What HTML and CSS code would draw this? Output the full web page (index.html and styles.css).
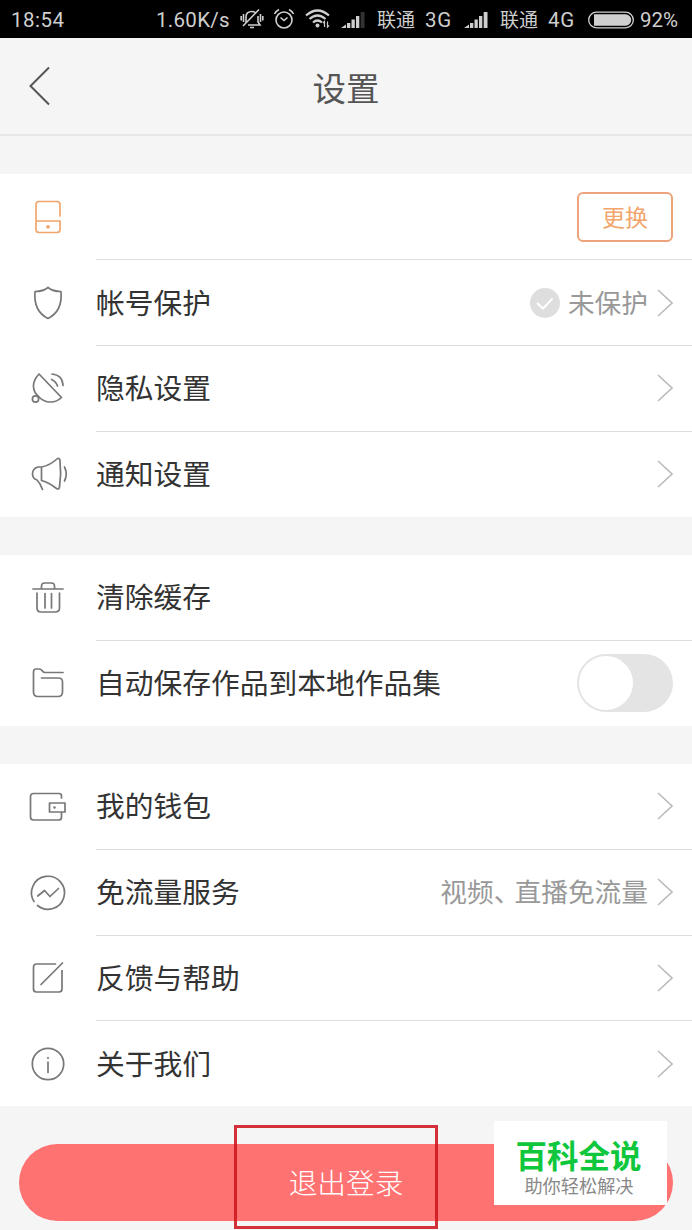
FILE: index.html
```html
<!DOCTYPE html>
<html lang="zh-CN">
<head>
<meta charset="utf-8">
<title>设置</title>
<link rel="stylesheet" href="styles.css">
</head>
<body>
<div class="screen">
  <div class="status">
    <span class="time">18:54</span>
    <span class="speed">1.60K/s</span>
    <svg class="s-bell" width="24" height="22" viewBox="0 0 24 22" fill="none" stroke="#cfcfcf" stroke-width="1.6"><path d="M6 14.500 V9 Q6 3.500 12 3.500 Q14 3.500 15 4.500 M18 8 V14 L20 17 H8 M10 19.500 H14 M19 1.500 L3 18 M3.500 6 V14 M1.200 8 V12.500 M20.500 6 V14 M22.800 8 V12.500"/></svg>
    <svg class="s-alarm" width="22" height="22" viewBox="0 0 22 22" fill="none" stroke="#cfcfcf" stroke-width="1.6"><circle cx="11" cy="12" r="8"/><path d="M7.500 9.500 L11 12.500 L14.500 9.500 M1.500 6 Q3 3 6 1.500 M20.500 6 Q19 3 16 1.500"/></svg>
    <svg class="s-wifi" width="26" height="20" viewBox="0 0 26 20" fill="none" stroke="#cfcfcf" stroke-width="2.200"><path d="M1 6.500 Q12.500 -3.500 24 6.500 M4.500 10 Q12.500 3 20.500 10 M8 13.500 Q12.500 9.500 17 13.500"/><circle cx="12.500" cy="16.500" r="2" fill="#cfcfcf" stroke="none"/><path d="M19.500 18 V12.500 L18 14 M22.500 12.500 V18 L24 16.500" stroke-width="1.200"/></svg>
    <svg class="s-sig" width="25" height="16" viewBox="0 0 25 16" fill="#cfcfcf"><path d="M0 16 L5 12.500 V16Z M6 11 H9.300 V16 H6Z M10.500 7.500 H13.800 V16 H10.500Z M15 4 H18.300 V16 H15Z"/><path d="M19.700 0 H23.500 V16 H19.700Z" fill="#333"/></svg>
    <span class="carrier">联通</span>
    <span class="net net3">3G</span>
    <svg class="s-sig" width="25" height="16" viewBox="0 0 25 16" fill="#cfcfcf"><path d="M0 16 L5 12.500 V16Z M6 11 H9.300 V16 H6Z M10.500 7.500 H13.800 V16 H10.500Z M15 4 H18.300 V16 H15Z M19.700 0 H23.500 V16 H19.700Z"/></svg>
    <span class="carrier">联通</span>
    <span class="net net4">4G</span>
    <svg class="s-batt" width="46" height="18" viewBox="0 0 46 18"><rect x=".7" y="1.200" width="44.600" height="15.600" rx="7.800" fill="none" stroke="#cfcfcf" stroke-width="1.300"/><path d="M6 3.300 H37.500 A5.700 5.700 0 0 1 37.500 14.700 H6Z" fill="#cfcfcf"/></svg>
    <span class="pct">92%</span>
  </div>

  <header class="header">
    <svg class="back" width="24" height="42" viewBox="0 0 24 42" fill="none" stroke="#555" stroke-width="2"><path d="M21 2.500 L2.500 21 L21 39.500"/></svg>
    <h1 class="title">设置</h1>
  </header>

  <section class="group">
    <div class="row">
      <svg class="icon orange" viewBox="0 0 40 40"><path d="M32 19 V7.500 Q32 4.500 29 4.500 H11 Q8 4.500 8 7.500 V32.500 Q8 35.500 11 35.500 H29 Q32 35.500 32 32.500 V24 H8"/><circle class="dot" cx="20" cy="29.800" r="1.900"/></svg>
      <div class="cell"><span class="change">更换</span></div>
    </div>
    <div class="row">
      <svg class="icon" viewBox="0 0 40 40"><path d="M20 4.500 C17 7 12 8.500 7 8.500 C6 20 9 30 20 35.500 C31 30 34 20 33 8.500 C28 8.500 23 7 20 4.500Z"/></svg>
      <div class="cell"><span class="label">帐号保护</span><svg class="check" width="30" height="30" viewBox="0 0 30 30"><circle cx="15" cy="15" r="15" fill="#dedede"/><path d="M7 15 L13 20.500 L22.500 10.500" fill="none" stroke="#fff" stroke-width="2"/></svg><span class="value">未保护</span><svg class="arrow" viewBox="0 0 16 28"><path d="M1 1 L15 14 L1 27"/></svg></div>
    </div>
    <div class="row">
      <svg class="icon" viewBox="0 0 40 40"><path d="M11 5 L33.500 28.500 C27 35 17 34 11.500 28.500 C3.500 22 3.500 13 11 5Z M23.500 10.500 Q28 12.500 29.500 17 M24 5 Q34.500 6 35 16.500"/><circle cx="7.500" cy="30" r="3.100"/></svg>
      <div class="cell"><span class="label">隐私设置</span><svg class="arrow" viewBox="0 0 16 28"><path d="M1 1 L15 14 L1 27"/></svg></div>
    </div>
    <div class="row">
      <svg class="icon" viewBox="0 0 40 40"><path d="M13.500 13 Q22 11.500 29.500 4.500 Q32 4 32 7 Q33.500 20 31.500 33 Q31 36 28.500 34.500 Q21 28.500 13.500 26.500Z M13.500 13 H10 Q4.500 14.500 4.500 20 Q4.500 24.500 9 26 Q12.500 29.500 14.500 35.500 M36.500 13 Q40 20 36.500 27"/></svg>
      <div class="cell"><span class="label">通知设置</span><svg class="arrow" viewBox="0 0 16 28"><path d="M1 1 L15 14 L1 27"/></svg></div>
    </div>
  </section>

  <section class="group">
    <div class="row">
      <svg class="icon" viewBox="0 0 40 40"><path d="M5 11 H35 M13.500 11 V8 Q13.500 5 16.500 5 H23.500 Q26.500 5 26.500 8 V11 M9 15 V30 Q9 34 13 34 H27 Q31.500 34 31.500 30 V15 M17 15.500 V30 M23.500 15.500 V30"/></svg>
      <div class="cell"><span class="label">清除缓存</span></div>
    </div>
    <div class="row">
      <svg class="icon" viewBox="0 0 40 40"><path d="M35 9.500 H17 Q15 9.500 14 7.500 Q13 6 11 6 H8 Q5.500 6 5.500 9 V29 Q5.500 33.500 10 33.500 H30 Q34.500 33.500 34.500 29 V19 Q34.500 15 30.500 15 H13.500"/></svg>
      <div class="cell"><span class="label">自动保存作品到本地作品集</span><span class="toggle"><span class="knob"></span></span></div>
    </div>
  </section>

  <section class="group">
    <div class="row">
      <svg class="icon" viewBox="0 0 40 40"><path d="M33.500 11 V9 Q33.500 6.500 31 6.500 H5.500 Q2.500 6.500 2.500 9.500 V30 Q2.500 33 5.500 33 H31 Q33.500 33 33.500 30 V25 M21.500 16 H37 V25 H21.500Z"/><circle class="dot" cx="26.500" cy="20.500" r="1.200"/></svg>
      <div class="cell"><span class="label">我的钱包</span><svg class="arrow" viewBox="0 0 16 28"><path d="M1 1 L15 14 L1 27"/></svg></div>
    </div>
    <div class="row">
      <svg class="icon" viewBox="0 0 40 40"><path d="M6 28.500 A16.500 16.500 0 1 1 9.500 32.500 M9.800 23 L16.500 17.500 L22 23.500 L30.500 15.500"/></svg>
      <div class="cell"><span class="label">免流量服务</span><span class="value">视频<span class="comma">、</span>直播免流量</span><svg class="arrow" viewBox="0 0 16 28"><path d="M1 1 L15 14 L1 27"/></svg></div>
    </div>
    <div class="row">
      <svg class="icon" viewBox="0 0 40 40"><path d="M27.500 6 H8.500 Q5.500 6 5.500 9 V31 Q5.500 34 8.500 34 H31 Q34 34 34 31 V12.500 M13 26.500 L34.500 5"/></svg>
      <div class="cell"><span class="label">反馈与帮助</span><svg class="arrow" viewBox="0 0 16 28"><path d="M1 1 L15 14 L1 27"/></svg></div>
    </div>
    <div class="row">
      <svg class="icon" viewBox="0 0 40 40"><circle cx="20" cy="20" r="15.700"/><path d="M20 18 V28.500"/><circle class="dot" cx="20" cy="14" r="1.100"/></svg>
      <div class="cell"><span class="label">关于我们</span><svg class="arrow" viewBox="0 0 16 28"><path d="M1 1 L15 14 L1 27"/></svg></div>
    </div>
  </section>

  <div class="logout">退出登录</div>
  <div class="highlight"></div>
  <div class="badge"><div class="badge-title">百科全说</div><div class="badge-sub">助你轻松解决</div></div>
</div>
</body>
</html>
```
FILE: styles.css
```css
* { box-sizing: border-box; }
body { margin: 0; background: #f5f5f5; font-family: "Noto Sans CJK SC", sans-serif; }
svg { display: block; flex: none; }
.screen { position: relative; width: 692px; height: 1230px; overflow: hidden; background: #f5f5f5; }

.status { display: flex; align-items: center; height: 38px; padding-left: 11px; background: #000; color: #cfcfcf; font: 20.500px/38px Roboto, "Noto Sans CJK SC", sans-serif; white-space: nowrap; }
.status span { flex: none; padding-top: 2px; }
.time { width: 145px; letter-spacing: .5px; }
.speed { width: 84px; letter-spacing: .3px; }
.s-bell { margin-right: 9px; }
.s-alarm { margin-right: 10px; }
.s-wifi { margin-right: 10px; }
.s-sig { margin: 1px 11px 0 0; }
.carrier { width: 48px; font-size: 19px; }
.status .carrier { padding-top: 3px; }
.net { letter-spacing: .8px; }
.net3 { width: 39px; }
.net4 { width: 40px; }
.s-batt { margin: 1px 6px 0 0; }

.header { display: flex; align-items: center; height: 98px; padding: 0 28px; border-bottom: 2px solid #e7e7e7; }
.back { margin-right: -24px; }
.title { flex: 1; margin: 0; padding-top: 1px; text-align: center; font-size: 33.500px; line-height: 48px; font-weight: 400; color: #555; }

.group { margin-top: 38.200px; background: #fff; }
.header + .group { margin-top: 38.400px; }
.row { display: flex; align-items: center; height: 85.800px; padding-left: 28px; }
.row:last-child { height: 85px; }
.icon { width: 40px; height: 40px; margin: 0 28px 0 0; fill: none; stroke: #777; stroke-width: 1.700; stroke-linecap: round; stroke-linejoin: round; overflow: visible; }
.icon .dot { fill: #777; stroke: none; }
.orange { stroke: #f2a56c; }
.orange .dot { fill: #f2a56c; }
.cell { display: flex; flex: 1; align-items: center; justify-content: flex-end; height: 100%; padding: 0 19px 0 0; border-bottom: 1px solid #ddd; }
.row:last-child .cell { border-bottom: 0; }
.label { margin: 0 auto 2px 0; font-size: 28.750px; line-height: 42px; color: #333; white-space: nowrap; }
.value { margin: 0 9px 2px 0; font-size: 26.700px; line-height: 40px; color: #999; white-space: nowrap; }
.comma { margin-right: 7.500px; font-feature-settings: "halt"; }
.check { margin-right: 8px; }
.arrow { width: 16px; height: 28px; fill: none; stroke: #bbb; stroke-width: 1.600; }
.change { width: 96px; height: 50px; border: 2px solid #eda47a; border-radius: 6px; text-align: center; font-size: 23px; line-height: 45px; color: #f2a56c; }
.toggle { width: 96px; height: 58px; padding: 2px; border-radius: 29px; background: #e4e4e4; }
.knob { display: block; width: 54px; height: 54px; border-radius: 50%; background: #fff; }

.logout { height: 77px; margin: 38px 19px 0; border-radius: 39px; background: #ff7272; color: #fff; text-align: center; font-size: 28.700px; line-height: 75px; font-weight: 300; }
.highlight { position: absolute; left: 234px; top: 1125px; width: 204px; height: 104px; border: 3px solid rgba(207, 20, 32, .88); }
.badge { position: absolute; left: 494px; top: 1121px; width: 173px; height: 84px; padding-top: 10px; background: #fff; text-align: center; white-space: nowrap; }
.badge-title { margin-right: 4px; font-size: 31.500px; line-height: 47px; font-weight: 700; color: #0fc73c; }
.badge-sub { margin-right: 3px; font-size: 18.200px; line-height: 15px; color: #888; }
```
